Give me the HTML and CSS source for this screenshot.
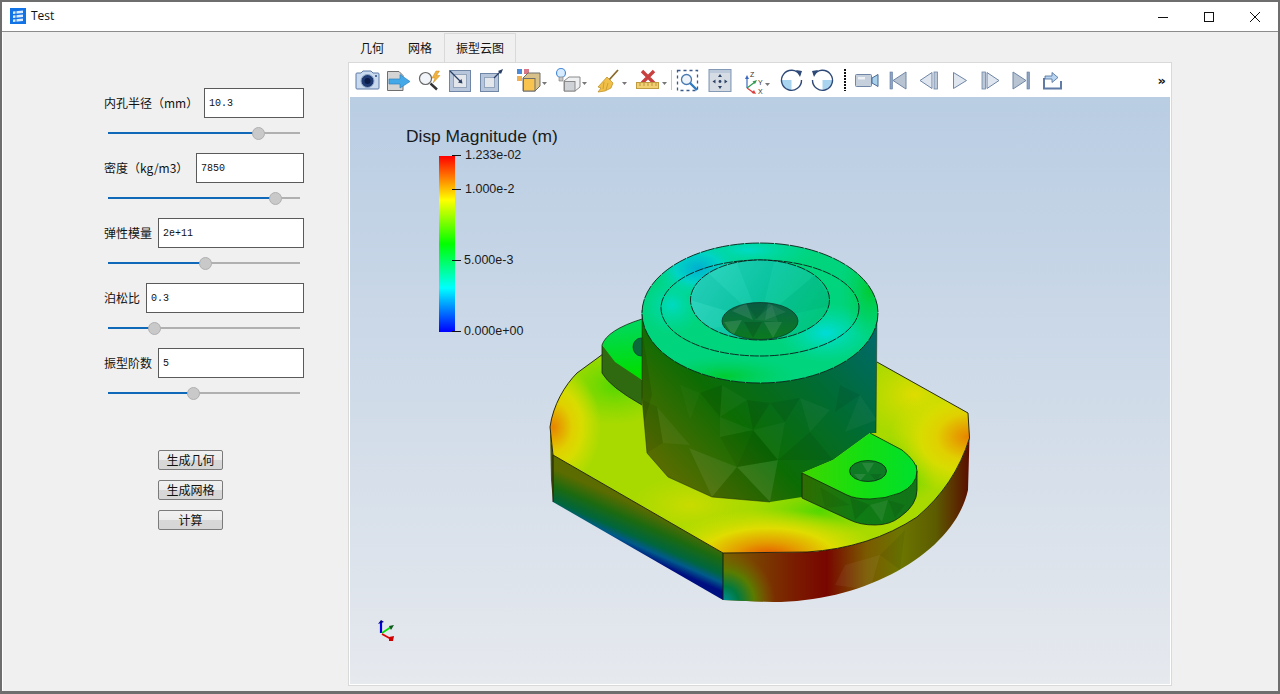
FILE: index.html
```html
<!DOCTYPE html>
<html lang="en">
<head>
  <meta charset="UTF-8">
  <title>Test</title>
  <link rel="stylesheet" href="styles.css">
</head>
<body>
  <div class="window">
    <div class="titlebar">
      <svg class="app-icon" viewBox="0 0 16 16">
        <rect width="16" height="16" fill="#1273e6"/>
        <path d="M3 3.500 L13 2.500 V5 L3 6 Z M3 7.500 L13 6.500 V9 L3 10 Z M3 11.500 L13 10.500 V13 L3 14 Z" fill="#dcecff"/>
        <path d="M6 3 V14" stroke="#1273e6" stroke-width="1"/>
      </svg>
      <span class="title-text">Test</span>
      <div class="win-buttons">
        <svg viewBox="0 0 46 29"><path d="M18 15.500 H28" stroke="#111" fill="none"/></svg>
        <svg viewBox="0 0 46 29"><rect x="18.500" y="10.500" width="9" height="9" stroke="#111" fill="none"/></svg>
        <svg viewBox="0 0 46 29"><path d="M18 10 L28 20 M28 10 L18 20" stroke="#111" fill="none"/></svg>
      </div>
    </div>

    <div class="client">
      <div class="params">
        <div class="field">
          <div class="field-row"><label>内孔半径（mm）</label><input class="val val-100" type="text" value="10.3"></div>
          <div class="slider"><div class="slider-fill" style="width:151px"></div><div class="slider-knob" style="left:151px"></div></div>
        </div>
        <div class="field">
          <div class="field-row"><label>密度（kg/m3）</label><input class="val val-108" type="text" value="7850"></div>
          <div class="slider"><div class="slider-fill" style="width:168px"></div><div class="slider-knob" style="left:168px"></div></div>
        </div>
        <div class="field">
          <div class="field-row"><label>弹性模量</label><input class="val val-146" type="text" value="2e+11"></div>
          <div class="slider"><div class="slider-fill" style="width:98px"></div><div class="slider-knob" style="left:98px"></div></div>
        </div>
        <div class="field">
          <div class="field-row"><label>泊松比</label><input class="val val-158" type="text" value="0.3"></div>
          <div class="slider"><div class="slider-fill" style="width:47px"></div><div class="slider-knob" style="left:47px"></div></div>
        </div>
        <div class="field">
          <div class="field-row"><label>振型阶数</label><input class="val val-146" type="text" value="5"></div>
          <div class="slider"><div class="slider-fill" style="width:86px"></div><div class="slider-knob" style="left:86px"></div></div>
        </div>
        <div class="actions">
          <button>生成几何</button>
          <button>生成网格</button>
          <button>计算</button>
        </div>
      </div>

      <div class="tabs-area">
        <div class="tabs">
          <div class="tab">几何</div>
          <div class="tab">网格</div>
          <div class="tab active">振型云图</div>
        </div>
        <div class="pane">
          <div class="toolbar">
            <!-- camera -->
            <svg class="tb tb-31" viewBox="0 0 31 34">
              <path d="M5 10 H9 L11 8 H19 L21 10 H26 Q27 10 27 11 V25 Q27 26 26 26 H5 Q4 26 4 25 V11 Q4 10 5 10 Z" fill="#c9d9ee" stroke="#5f7ba6"/>
              <circle cx="15.500" cy="18" r="6.500" fill="#1f3a72" stroke="#8ea6c8"/>
              <circle cx="15.500" cy="18" r="3" fill="#0c1c48"/>
              <circle cx="24" cy="13" r="1" fill="#2a4a80"/>
            </svg>
            <!-- export -->
            <svg class="tb tb-31" viewBox="0 0 31 34">
              <path d="M4.500 8.500 H16 L20 12.500 V27.500 H4.500 Z" fill="#d4d4d4" stroke="#6e6e6e"/>
              <path d="M6 16 H17 V11.500 L27 18.500 L17 25 V21 H6 Z" fill="#45a9e8" stroke="#2f82c0" stroke-width=".7"/>
            </svg>
            <!-- zoom to data -->
            <svg class="tb tb-31" viewBox="0 0 31 34">
              <circle cx="11.500" cy="15.500" r="6" fill="#f1f4f8" stroke="#666" stroke-width="1.200"/>
              <path d="M16.500 20.500 L23 26.500" stroke="#333" stroke-width="2.400"/>
              <path d="M22 8 L18 15 H21 L19 20 L26 12.500 H22.500 L25.500 8 Z" fill="#f2b23e" stroke="#c98a1c" stroke-width=".5"/>
            </svg>
            <!-- interact select -->
            <svg class="tb tb-31" viewBox="0 0 31 34">
              <rect x="4.500" y="7.500" width="21" height="21" fill="#b7c6da" stroke="#6f86a6"/>
              <rect x="8.500" y="11.500" width="13" height="13" fill="#e3e6ea" stroke="#93a5bd"/>
              <path d="M5 8 L16 19" stroke="#2a3f66" stroke-width="1.200"/>
              <path d="M17.500 20.500 L13 19.500 L16.500 16 Z" fill="#2a3f66"/>
            </svg>
            <!-- box outward -->
            <svg class="tb tb-31" viewBox="0 0 31 34">
              <rect x="4.500" y="10.500" width="18" height="18" fill="#b7c6da" stroke="#6f86a6"/>
              <rect x="8.500" y="14.500" width="10" height="10" fill="#e3e6ea" stroke="#93a5bd"/>
              <path d="M18 15 L25 8" stroke="#2a3f66" stroke-width="1.200"/>
              <path d="M27 6 L25 11 L22 8 Z" fill="#2a3f66"/>
            </svg>
            <!-- representation -->
            <svg class="tb tb-42" viewBox="0 0 42 34">
              <rect x="10" y="6" width="5" height="5" fill="#4a8ad8"/>
              <rect x="17" y="6" width="5" height="5" fill="#d87888"/>
              <rect x="10" y="13" width="5" height="5" fill="#eeb050"/>
              <path d="M16 15 L21 10 H33 V23 L28 28 H16 Z" fill="#d8c08a" stroke="#6e6e6e"/>
              <rect x="16.500" y="15.500" width="11.500" height="12.500" fill="#f8c44e" stroke="#6e6e6e"/>
              <path d="M35 19 H40 L37.500 22 Z" fill="#777"/>
            </svg>
            <!-- light -->
            <svg class="tb tb-42" viewBox="0 0 42 34">
              <circle cx="12" cy="10" r="4.500" fill="#d7ecff" stroke="#4a8ad8" stroke-width="1.200"/>
              <path d="M10 14 H14 V18 H10 Z" fill="#c8c8c8" stroke="#777" stroke-width=".6"/>
              <path d="M15 18 L20 14 H31 V24 L26 28 H15 Z" fill="#eef0f2" stroke="#8a8a8a"/>
              <rect x="15.500" y="18.500" width="10.500" height="9.500" fill="#cfd3d8" stroke="#8a8a8a"/>
              <path d="M33 19 H38 L35.500 22 Z" fill="#777"/>
            </svg>
            <!-- broom -->
            <svg class="tb tb-38" viewBox="0 0 38 34">
              <path d="M27 7 L18 17" stroke="#8a6a2a" stroke-width="1.800"/>
              <path d="M16 14 L22 20 L20 25 L14 28 L7 29 L10 25 L7 24 Z" fill="#f0c048" stroke="#b98a20" stroke-width=".7"/>
              <path d="M13 19 L12 26 M17 20 L15 27" stroke="#b98a20" stroke-width=".6"/>
              <path d="M31 19 H36 L33.500 22 Z" fill="#777"/>
            </svg>
            <!-- ruler and x -->
            <svg class="tb tb-42" viewBox="0 0 42 34">
              <path d="M13 8 L25 20 M25 8 L13 20" stroke="#c84040" stroke-width="3.400"/>
              <rect x="7.500" y="19.500" width="22" height="6" fill="#f0d070" stroke="#c09a40"/>
              <path d="M11 20 V23 M15 20 V23 M19 20 V23 M23 20 V23 M27 20 V23" stroke="#a88030" stroke-width=".7"/>
              <path d="M33 19 H38 L35.500 22 Z" fill="#777"/>
            </svg>
            <div class="sep"></div>
            <!-- zoom box -->
            <svg class="tb tb-32" viewBox="0 0 32 34">
              <rect x="5.500" y="7.500" width="20" height="20" fill="none" stroke="#3a5a8a" stroke-width="1.300" stroke-dasharray="3 3"/>
              <circle cx="14.500" cy="16.500" r="5" fill="#eef4fa" stroke="#4a7ab0" stroke-width="1.300"/>
              <path d="M18 20 L25 27" stroke="#2f7ac0" stroke-width="2.400"/>
            </svg>
            <!-- pan -->
            <svg class="tb tb-32" viewBox="0 0 32 34">
              <rect x="5" y="6.500" width="22" height="22" fill="#bcc9da" stroke="#8499b6"/>
              <rect x="6" y="10" width="20" height="18" fill="#d6dce4"/>
              <path d="M16 11 L18 14 H14 Z M16 26 L18 23 H14 Z M8.500 18.500 L11.500 16.500 V20.500 Z M23.500 18.500 L20.500 16.500 V20.500 Z" fill="#2f4468"/>
              <circle cx="16" cy="18.500" r="1.400" fill="#2f4468"/>
            </svg>
            <!-- axes -->
            <svg class="tb tb-40" viewBox="0 0 40 34">
              <path d="M11 25 V15" stroke="#3a6ac0" stroke-width="1.200"/>
              <path d="M11 12 L9 16 H13 Z" fill="#3a6ac0"/>
              <path d="M11 25 L19 19" stroke="#2a9a4a" stroke-width="1.200"/>
              <path d="M21 17 L16.500 18.500 L19 21 Z" fill="#2a9a4a"/>
              <path d="M11 25 L18 30" stroke="#d84040" stroke-width="1.200"/>
              <path d="M20 31 L15.500 30 L18 27 Z" fill="#d84040"/>
              <text class="axis-label" x="14" y="14">Z</text>
              <text class="axis-label" x="22" y="22">Y</text>
              <text class="axis-label" x="22" y="31">X</text>
              <path d="M29 20 H34 L31.500 23 Z" fill="#777"/>
            </svg>
            <!-- rotate cw -->
            <svg class="tb tb-31" viewBox="0 0 31 34">
              <path d="M15.500 17 H25.500 A10 10 0 0 1 15.500 27 Z" fill="#a8d4f0" transform="rotate(90 15.500 17)"/>
              <path d="M24 12 A10 10 0 1 0 25.500 17" fill="none" stroke="#2f4a78" stroke-width="1.400"/>
              <path d="M20 7 L26 8 L24 14 Z" fill="#2f4a78"/>
            </svg>
            <!-- rotate ccw -->
            <svg class="tb tb-31" viewBox="0 0 31 34">
              <path d="M15.500 17 H25.500 A10 10 0 0 1 15.500 27 Z" fill="#a8d4f0"/>
              <path d="M7 12 A10 10 0 1 1 5.500 17" fill="none" stroke="#2f4a78" stroke-width="1.400"/>
              <path d="M11 7 L5 8 L7 14 Z" fill="#2f4a78"/>
            </svg>
            <div class="dots"></div>
            <!-- video -->
            <svg class="tb tb-30" viewBox="0 0 30 34">
              <rect x="3.500" y="11.500" width="16" height="12" rx="1" fill="#c6cfdc" stroke="#6f86a6"/>
              <rect x="6" y="14" width="7" height="2.500" fill="#eef1f5"/>
              <path d="M20 15 L26 11.500 V23.500 L20 20 Z" fill="#a8d0ea" stroke="#4a6a96"/>
            </svg>
            <!-- first -->
            <svg class="tb tb-31" viewBox="0 0 31 34">
              <rect x="8" y="9" width="2.500" height="17" fill="#8ea3bf" stroke="#5f7ba6" stroke-width=".6"/>
              <path d="M24 9 V26 L11 17.500 Z" fill="#b9c4d2" stroke="#6f86a6"/>
            </svg>
            <!-- prev -->
            <svg class="tb tb-31" viewBox="0 0 31 34">
              <path d="M19 9.500 V25.500 L7 17.500 Z" fill="#dfe6ef" stroke="#6f86a6"/>
              <rect x="21" y="9" width="3.500" height="17" fill="#bcc8d8" stroke="#6f86a6" stroke-width=".8"/>
            </svg>
            <!-- play -->
            <svg class="tb tb-31" viewBox="0 0 31 34">
              <path d="M9.500 9.500 V25.500 L22.500 17.500 Z" fill="#dfe6ef" stroke="#6f86a6"/>
            </svg>
            <!-- next -->
            <svg class="tb tb-31" viewBox="0 0 31 34">
              <rect x="7" y="9" width="3.500" height="17" fill="#bcc8d8" stroke="#6f86a6" stroke-width=".8"/>
              <path d="M12 9.500 V25.500 L24 17.500 Z" fill="#dfe6ef" stroke="#6f86a6"/>
            </svg>
            <!-- last -->
            <svg class="tb tb-31" viewBox="0 0 31 34">
              <path d="M7 9 V26 L20 17.500 Z" fill="#b9c4d2" stroke="#6f86a6"/>
              <rect x="21" y="9" width="2.500" height="17" fill="#8ea3bf" stroke="#5f7ba6" stroke-width=".6"/>
            </svg>
            <!-- loop -->
            <svg class="tb tb-31" viewBox="0 0 31 34">
              <path d="M7 15 V25.500 H24 V18" fill="none" stroke="#5f7ba6" stroke-width="2"/>
              <path d="M8 16 V13 H15 V9.500 L21 14.500 L15 19.500 V16 Z" fill="#b8d4f0" stroke="#4a6a96" stroke-width=".8"/>
            </svg>
            <div class="more">»</div>
          </div>

          <svg class="scene" viewBox="350 97 820 587">
            <defs>
              <linearGradient id="sky" x1="0" y1="0" x2="0" y2="1">
                <stop offset="0" stop-color="#b9cde3"/>
                <stop offset="1" stop-color="#e6e9ee"/>
              </linearGradient>
              <linearGradient id="lut" x1="0" y1="1" x2="0" y2="0">
                <stop offset="0" stop-color="#0000ff"/>
                <stop offset=".25" stop-color="#00ffff"/>
                <stop offset=".5" stop-color="#00ff00"/>
                <stop offset=".75" stop-color="#ffff00"/>
                <stop offset="1" stop-color="#ff0000"/>
              </linearGradient>
              <linearGradient id="faceLeft" gradientUnits="userSpaceOnUse" x1="650" y1="511" x2="632" y2="552">
                <stop offset="0" stop-color="#5c6c00"/>
                <stop offset=".35" stop-color="#1c6a10"/>
                <stop offset=".65" stop-color="#00663c"/>
                <stop offset=".82" stop-color="#005a8a"/>
                <stop offset="1" stop-color="#000f80"/>
              </linearGradient>
              <linearGradient id="faceRight" gradientUnits="userSpaceOnUse" x1="723" y1="0" x2="970" y2="0">
                <stop offset="0" stop-color="#7a6000"/>
                <stop offset=".12" stop-color="#7a4400"/>
                <stop offset=".3" stop-color="#7a1a00"/>
                <stop offset=".42" stop-color="#780600"/>
                <stop offset=".58" stop-color="#7a5a00"/>
                <stop offset=".72" stop-color="#6c7600"/>
                <stop offset=".86" stop-color="#5c5c00"/>
                <stop offset="1" stop-color="#5a0c00"/>
              </linearGradient>
              <radialGradient id="faceCorner" gradientUnits="userSpaceOnUse" cx="723" cy="602" r="52">
                <stop offset="0" stop-color="#0090a0"/>
                <stop offset=".3" stop-color="#007a40"/>
                <stop offset=".6" stop-color="#5a7c00"/>
                <stop offset="1" stop-color="#7a6000" stop-opacity="0"/>
              </radialGradient>
              <linearGradient id="bossSide" gradientUnits="userSpaceOnUse" x1="878" y1="340" x2="700" y2="505">
                <stop offset="0" stop-color="#006a68"/>
                <stop offset=".3" stop-color="#006c34"/>
                <stop offset=".65" stop-color="#0c6c04"/>
                <stop offset="1" stop-color="#566c00"/>
              </linearGradient>
              <linearGradient id="lugSide" gradientUnits="userSpaceOnUse" x1="802" y1="0" x2="917" y2="0">
                <stop offset="0" stop-color="#2f6c00"/>
                <stop offset=".5" stop-color="#0f7c14"/>
                <stop offset="1" stop-color="#127418"/>
              </linearGradient>
              <linearGradient id="lugTop" gradientUnits="userSpaceOnUse" x1="805" y1="470" x2="915" y2="470">
                <stop offset="0" stop-color="#3cd800"/>
                <stop offset=".5" stop-color="#16de10"/>
                <stop offset="1" stop-color="#00e02c"/>
              </linearGradient>
              <linearGradient id="lugTopLeft" gradientUnits="userSpaceOnUse" x1="620" y1="322" x2="625" y2="375">
                <stop offset="0" stop-color="#00d860"/>
                <stop offset="1" stop-color="#00de00"/>
              </linearGradient>
              <linearGradient id="holeFill" x1="0" y1="0" x2="0" y2="1">
                <stop offset="0" stop-color="#0a6248"/>
                <stop offset="1" stop-color="#0a7a1e"/>
              </linearGradient>
              <linearGradient id="coneFill" x1="0" y1=".2" x2="1" y2=".6">
                <stop offset="0" stop-color="#26d4c0"/>
                <stop offset=".5" stop-color="#0cc8a4"/>
                <stop offset="1" stop-color="#00c67c"/>
              </linearGradient>
              <radialGradient id="hotOrange">
                <stop offset="0" stop-color="#e88400"/>
                <stop offset=".4" stop-color="#e0d000"/>
                <stop offset=".6" stop-color="#d8dc00"/>
                <stop offset="1" stop-color="#d0e000" stop-opacity="0"/>
              </radialGradient>
              <radialGradient id="hotRed">
                <stop offset="0" stop-color="#e84c00"/>
                <stop offset=".3" stop-color="#e49c00"/>
                <stop offset=".6" stop-color="#e0dc00"/>
                <stop offset="1" stop-color="#d0e000" stop-opacity="0"/>
              </radialGradient>
              <radialGradient id="warmYellow">
                <stop offset="0" stop-color="#e0dc00"/>
                <stop offset="1" stop-color="#d0dc00" stop-opacity="0"/>
              </radialGradient>
              <radialGradient id="coolGreen">
                <stop offset="0" stop-color="#50d800"/>
                <stop offset="1" stop-color="#70d800" stop-opacity="0"/>
              </radialGradient>
              <radialGradient id="cyanSpot">
                <stop offset="0" stop-color="#00b0d0"/>
                <stop offset=".5" stop-color="#00d4c4"/>
                <stop offset="1" stop-color="#00d8a0" stop-opacity="0"/>
              </radialGradient>
              <radialGradient id="cyanSpot2">
                <stop offset="0" stop-color="#00dcd8"/>
                <stop offset="1" stop-color="#00dcb0" stop-opacity="0"/>
              </radialGradient>
              <radialGradient id="greenSpot">
                <stop offset="0" stop-color="#00cc30"/>
                <stop offset="1" stop-color="#00d060" stop-opacity="0"/>
              </radialGradient>
              <clipPath id="baseClip">
                <path d="M550,427 C553,405 565,385 577,373 L603,354 L700,340 L877,362 L968,413 L969.500,438 Q955,485 917,517 Q870,548 807,552 L723,553 L553,455 Z"/>
              </clipPath>
              <clipPath id="faceClip">
                <path d="M723,553 L807,552 Q870,548 917,517 Q955,485 969.500,438 L968,490 C955,550 870,602 773,602 L723,600 Z"/>
              </clipPath>
              <clipPath id="ringClip"><ellipse cx="760" cy="313" rx="118" ry="70"/></clipPath>
              <clipPath id="coneClip"><ellipse cx="760" cy="300" rx="69.500" ry="40"/></clipPath>
              <clipPath id="holeClip"><ellipse cx="760" cy="321" rx="38" ry="18.500"/></clipPath>
              <clipPath id="bossClip">
                <path d="M642,310 L642,397 L647,453 L668,477 L712,497 L770,502 L802,497 L802,473 L833,460 L870,433 L876,433 L877,310 Z"/>
              </clipPath>
              <clipPath id="lugClip">
                <path d="M802,473 V498 L850,520 Q860,525 875,525 Q890,525 900,517 Q917,505 917,490 V477 Z"/>
              </clipPath>
            </defs>

            <rect x="350" y="97" width="820" height="587" fill="url(#sky)"/>

            <!-- scalar bar -->
            <text class="bar-title" x="406" y="142">Disp Magnitude (m)</text>
            <rect x="439" y="156" width="16" height="176" fill="url(#lut)"/>
            <path d="M452 155.500 H461 M452 189.500 H461 M452 260.500 H461 M452 331.500 H461" stroke="#111" stroke-width="1"/>
            <text class="bar-label" x="465" y="159">1.233e-02</text>
            <text class="bar-label" x="465" y="193">1.000e-2</text>
            <text class="bar-label" x="464" y="264">5.000e-3</text>
            <text class="bar-label" x="464" y="335">0.000e+00</text>

            <!-- base: side faces -->
            <path d="M553,455 L723,553 V600 L553,502 Z" fill="url(#faceLeft)"/>
            <path d="M723,553 L807,552 Q870,548 917,517 Q955,485 969.500,438 L968,490 C955,550 870,602 773,602 L723,600 Z" fill="url(#faceRight)"/>
            <g clip-path="url(#faceClip)">
              <circle cx="723" cy="602" r="52" fill="url(#faceCorner)"/>
              <polygon points="845,565 880,555 870,590 835,585" fill="#fff" opacity=".05"/>
              <polygon points="880,555 905,530 900,570" fill="#000" opacity=".06"/>
            </g>
            <path d="M550,427 L553,455 V502 L551,480 Z" fill="#4a5a00"/>

            <!-- base: top -->
            <path d="M550,427 C553,405 565,385 577,373 L603,354 L700,340 L877,362 L968,413 L969.500,438 Q955,485 917,517 Q870,548 807,552 L723,553 L553,455 Z" fill="#a8da00"/>
            <g clip-path="url(#baseClip)">
              <ellipse cx="615" cy="385" rx="58" ry="40" fill="url(#coolGreen)"/>
              <ellipse cx="820" cy="510" rx="70" ry="26" fill="url(#coolGreen)"/>
              <ellipse cx="900" cy="470" rx="40" ry="36" fill="url(#coolGreen)"/>
              <ellipse cx="553" cy="427" rx="48" ry="62" fill="url(#hotOrange)"/>
              <ellipse cx="915" cy="395" rx="55" ry="42" fill="url(#warmYellow)"/>
              <ellipse cx="968" cy="437" rx="78" ry="58" fill="url(#hotOrange)"/>
              <ellipse cx="690" cy="505" rx="60" ry="30" fill="url(#warmYellow)" opacity=".6"/>
              <ellipse cx="768" cy="557" rx="112" ry="48" fill="url(#hotRed)"/>
            </g>
            <path d="M553,455 L723,553 L807,552 Q870,548 917,517 Q955,485 969.500,438 L968,413 L877,362 M553,455 L550,427 C553,405 565,385 577,373 L603,354 M553,455 V502 M723,553 V600" fill="none" stroke="#1a1a10" stroke-width=".9"/>

            <!-- left lug -->
            <path d="M602,345 V373 Q610,387 642,405 V380 Z" fill="#2f6a10"/>
            <path d="M602,345 Q607,330 642,319 V380 L615,362 Z" fill="url(#lugTopLeft)"/>
            <ellipse cx="641" cy="347" rx="8" ry="9" fill="#0a6a3a" stroke="#123" stroke-width=".6"/>
            <path d="M642,319 Q607,330 602,345 V373 Q610,387 642,405" fill="none" stroke="#1a2a10" stroke-width=".8"/>

            <!-- boss side -->
            <path d="M642,310 L642,397 L647,453 L668,477 L712,497 L770,502 L802,497 L802,473 L833,460 L870,433 L876,433 L877,310 Z" fill="url(#bossSide)"/>
            <g clip-path="url(#bossClip)" opacity=".7">
              <polygon points="689,448 737,467 712,497" fill="#fff" opacity=".1"/>
              <polygon points="737,467 778,460 770,502" fill="#fff" opacity=".13"/>
              <polygon points="720,437 753,430 737,467" fill="#000" opacity=".08"/>
              <polygon points="753,430 778,460 737,467" fill="#000" opacity=".14"/>
              <polygon points="753,430 785,422 778,460" fill="#fff" opacity=".05"/>
              <polygon points="747,400 770,403 753,430" fill="#000" opacity=".13"/>
              <polygon points="700,393 722,385 720,417" fill="#000" opacity=".12"/>
              <polygon points="722,385 747,400 720,417" fill="#fff" opacity=".05"/>
              <polygon points="657,407 690,445 663,443" fill="#fff" opacity=".07"/>
              <polygon points="720,417 753,430 720,437" fill="#fff" opacity=".06"/>
              <polygon points="770,403 800,398 785,422" fill="#000" opacity=".1"/>
              <polygon points="800,398 830,410 810,432" fill="#fff" opacity=".06"/>
              <polygon points="778,460 810,432 833,460" fill="#000" opacity=".1"/>
              <polygon points="840,385 860,395 835,412" fill="#000" opacity=".1"/>
              <polygon points="860,395 877,420 845,432" fill="#fff" opacity=".05"/>
              <polygon points="712,497 737,467 770,502" fill="#000" opacity=".08"/>
              <polygon points="643,400 657,407 663,443 647,453" fill="#000" opacity=".1"/>
              <polygon points="680,385 700,393 690,420" fill="#fff" opacity=".04"/>
              <polygon points="642,330 652,395 642,430" fill="#000" opacity=".15"/>
            </g>
            <path d="M642,310 L642,397 L647,453 L668,477 L712,497 L770,502 M876,433 L877,310" fill="none" stroke="#1a2a10" stroke-width=".5"/>

            <!-- boss top -->
            <ellipse cx="760" cy="313" rx="118" ry="70" fill="#00d47c"/>
            <g clip-path="url(#ringClip)">
              <ellipse cx="748" cy="250" rx="70" ry="20" fill="url(#cyanSpot2)" opacity=".8"/>
              <ellipse cx="698" cy="268" rx="46" ry="30" fill="url(#cyanSpot)"/>
              <ellipse cx="826" cy="333" rx="50" ry="30" fill="url(#cyanSpot2)"/>
              <ellipse cx="672" cy="305" rx="32" ry="30" fill="url(#cyanSpot2)" opacity=".75"/>
              <ellipse cx="870" cy="290" rx="30" ry="50" fill="url(#greenSpot)"/>
              <ellipse cx="725" cy="376" rx="70" ry="20" fill="url(#greenSpot)"/>
            </g>
            <ellipse cx="760" cy="313" rx="118" ry="70" fill="none" stroke="#10201a" stroke-width=".9" stroke-dasharray="14 1"/>
            <ellipse cx="760" cy="308" rx="99" ry="48" fill="none" stroke="#0c1a18" stroke-width=".9" stroke-dasharray="9 1"/>

            <!-- cone and hole -->
            <ellipse cx="760" cy="300" rx="69.500" ry="40" fill="url(#coneFill)"/>
            <g clip-path="url(#coneClip)" opacity=".7">
              <polygon points="760,321 705,270 735,258" fill="#fff" opacity=".05"/>
              <polygon points="760,321 735,258 775,258" fill="#000" opacity=".03"/>
              <polygon points="760,321 775,258 815,275" fill="#fff" opacity=".04"/>
              <polygon points="760,321 815,275 835,305" fill="#000" opacity=".05"/>
              <polygon points="760,321 690,300 705,270" fill="#000" opacity=".04"/>
              <polygon points="760,321 700,330 690,300" fill="#fff" opacity=".08"/>
              <polygon points="790,345 835,305 815,345" fill="#fff" opacity=".1"/>
            </g>
            <ellipse cx="760" cy="300" rx="69.500" ry="40" fill="none" stroke="#0c1a18" stroke-width=".9" stroke-dasharray="9 1"/>
            <ellipse cx="760" cy="321" rx="38" ry="18.500" fill="url(#holeFill)"/>
            <g clip-path="url(#holeClip)">
              <polygon points="732,311 746,303 753,320" fill="#fff" opacity=".1"/>
              <polygon points="746,303 768,303 757,320" fill="#000" opacity=".08"/>
              <polygon points="768,303 786,312 765,320" fill="#fff" opacity=".07"/>
              <polygon points="724,322 742,320 733,336" fill="#fff" opacity=".12"/>
              <polygon points="744,322 762,322 753,338" fill="#000" opacity=".12"/>
              <polygon points="764,322 782,322 773,338" fill="#fff" opacity=".1"/>
              <polygon points="755,320 772,305 778,322" fill="#fff" opacity=".06"/>
            </g>
            <ellipse cx="760" cy="321" rx="38" ry="18.500" fill="none" stroke="#0c2a20" stroke-width=".7"/>

            <!-- right lug -->
            <path d="M802,473 V498 L850,520 Q860,525 875,525 Q890,525 900,517 Q917,505 917,490 V465 L870,480 Z" fill="url(#lugSide)"/>
            <g clip-path="url(#lugClip)">
              <polygon points="850,497 870,505 855,520" fill="#000" opacity=".1"/>
              <polygon points="870,505 888,500 882,522" fill="#fff" opacity=".07"/>
              <polygon points="888,500 905,505 895,518" fill="#000" opacity=".08"/>
              <polygon points="820,487 850,505 825,508" fill="#000" opacity=".06"/>
            </g>
            <path d="M870,433 L902,450 Q917,462 917,471 Q917,485 900,493 Q885,499 870,499 Q855,499 847,495 L802,473 L833,460 Z" fill="url(#lugTop)"/>
            <ellipse cx="868" cy="471" rx="18.500" ry="10.500" fill="#0e7a24" stroke="#0a2a14" stroke-width=".8"/>
            <polygon points="862,463 874,463 868,473" fill="#fff" opacity=".1"/>
            <polygon points="854,474 866,474 860,481" fill="#fff" opacity=".1"/>
            <polygon points="870,474 882,474 876,481" fill="#000" opacity=".1"/>
            <path d="M870,433 L902,450 Q917,462 917,471 V490 Q917,505 900,517 Q890,525 875,525 Q860,525 850,520 L802,498 V473 L847,495 Q855,499 870,499 Q885,499 900,493 Q917,485 917,471" fill="none" stroke="#14240c" stroke-width=".8"/>

            <!-- orientation triad -->
            <path d="M381 633 V622" stroke="#0000e0" stroke-width="2.200"/>
            <path d="M378 624 L381 620 L384 622 Z" fill="#000090"/>
            <path d="M382 633 L391 627" stroke="#00dd00" stroke-width="1.600"/>
            <path d="M389 626 L394 625 L391 630 Z" fill="#0a5a1a"/>
            <path d="M382 634 L391 639" stroke="#e00000" stroke-width="1.800"/>
            <path d="M389 637 L394 636 L393 641 H389 Z" fill="#d00000"/>
          </svg>
        </div>
      </div>
    </div>
  </div>
</body>
</html>
```

FILE: styles.css
```css
html, body {
  margin: 0;
  padding: 0;
  height: 100%;
  overflow: hidden;
}

.window {
  box-sizing: border-box;
  width: 1280px;
  height: 694px;
  display: flex;
  flex-direction: column;
  background: #fff;
  border-top: 2px solid #6e6e6e;
  border-left: 2px solid #6e6e6e;
  border-right: 2px solid #6e6e6e;
  border-bottom: 3px solid #6e6e6e;
  font-family: "Noto Sans CJK SC", "Liberation Sans", sans-serif;
  font-size: 12px;
  color: #111;
}

.titlebar {
  height: 29px;
  display: flex;
  align-items: center;
  border-bottom: 1px solid #8c8c8c;
  flex: none;
}

.app-icon {
  width: 16px;
  height: 16px;
  margin: 0 0 1px 8px;
}

.title-text {
  margin: 0 0 2px 5px;
  font-family: "Open Sans", "Liberation Sans", sans-serif;
  font-size: 12px;
}

.win-buttons {
  margin-left: auto;
  display: flex;
}

.win-buttons svg {
  width: 46px;
  height: 29px;
  display: block;
}

.client {
  flex: 1;
  display: flex;
  background: #f0f0f0;
  margin-left: 1px;
  min-height: 0;
}

.params {
  width: 345px;
  flex: none;
  box-sizing: border-box;
  padding: 56px 0 0 101px;
}

.field {
  width: 200px;
  height: 65px;
}

.field-row {
  display: flex;
  align-items: center;
  justify-content: space-between;
  height: 30px;
}

.field-row label {
  white-space: nowrap;
  font-size: 12px;
  padding-bottom: 2px;
}

.val {
  box-sizing: border-box;
  height: 30px;
  padding: 0 3px 0 4px;
  border: 1px solid #5a5a5a;
  border-radius: 0;
  background: #fff;
  outline: none;
  font-family: "Liberation Mono", monospace;
  font-size: 10px;
  color: #111;
}

.val-100 { width: 100px; }
.val-108 { width: 108px; }
.val-146 { width: 146px; }
.val-158 { width: 158px; }

.slider {
  position: relative;
  width: 192px;
  height: 2px;
  margin: 14px 0 0 4px;
  background: #b0b0b0;
}

.slider-fill {
  height: 2px;
  background: #0f69b8;
}

.slider-knob {
  position: absolute;
  top: -5px;
  width: 11px;
  height: 11px;
  margin-left: -7px;
  border: 1px solid #b0b0b0;
  border-radius: 50%;
  background: #c9c9c9;
}

.actions {
  display: flex;
  flex-direction: column;
  gap: 10px;
  margin: 37px 0 0 54px;
}

.actions button {
  box-sizing: border-box;
  width: 65px;
  height: 20px;
  padding: 0;
  border: 1px solid #7a7a7a;
  border-radius: 2px;
  background: linear-gradient(#f0f0f0 0, #ececec 50%, #d8d8d8 50%, #d6d6d6 100%);
  font-family: "Noto Sans CJK SC", sans-serif;
  font-size: 12px;
  line-height: 16px;
  color: #111;
}

.tabs-area {
  flex: none;
  width: 824px;
  display: flex;
  flex-direction: column;
  padding-bottom: 5px;
}

.tabs {
  height: 29px;
  padding-top: 1px;
  display: flex;
  flex: none;
}

.tab {
  padding: 0 11px;
  line-height: 28px;
  font-size: 12px;
  border: 1px solid transparent;
  border-bottom: none;
}

.tab.active {
  border-color: #d9d9d9;
  background: #f0f0f0;
}

.pane {
  flex: 1;
  display: flex;
  flex-direction: column;
  border: 1px solid #d9d9d9;
  background: #fff;
  min-height: 0;
}

.toolbar {
  height: 34px;
  display: flex;
  align-items: center;
  flex: none;
  background: #fff;
  padding-left: 3px;
}

.tb {
  height: 34px;
  flex: none;
  display: block;
}

.tb-30 { width: 30px; }
.tb-31 { width: 31px; }
.tb-32 { width: 32px; }
.tb-38 { width: 38px; }
.tb-40 { width: 40px; }
.tb-42 { width: 42px; }

.sep {
  width: 1px;
  height: 20px;
  background: #c8c8c8;
  flex: none;
}

.dots {
  width: 14px;
  height: 22px;
  flex: none;
  background: linear-gradient(#111 60%, transparent 60%) center top / 2px 3px repeat-y;
}

.more {
  margin-left: auto;
  margin-right: 5px;
  font-family: "DejaVu Sans", sans-serif;
  font-size: 13px;
  font-weight: bold;
  line-height: 13px;
}

.axis-label {
  font-family: "Liberation Sans", sans-serif;
  font-size: 7px;
  fill: #333;
}

.scene {
  display: block;
  width: 820px;
  height: 587px;
  margin-left: 1px;
  flex: none;
}

.bar-title {
  font-family: "Liberation Sans", sans-serif;
  font-size: 17.400px;
  fill: #1a1a1a;
}

.bar-label {
  font-family: "Liberation Sans", sans-serif;
  font-size: 12.500px;
  fill: #1a1a1a;
}
```
